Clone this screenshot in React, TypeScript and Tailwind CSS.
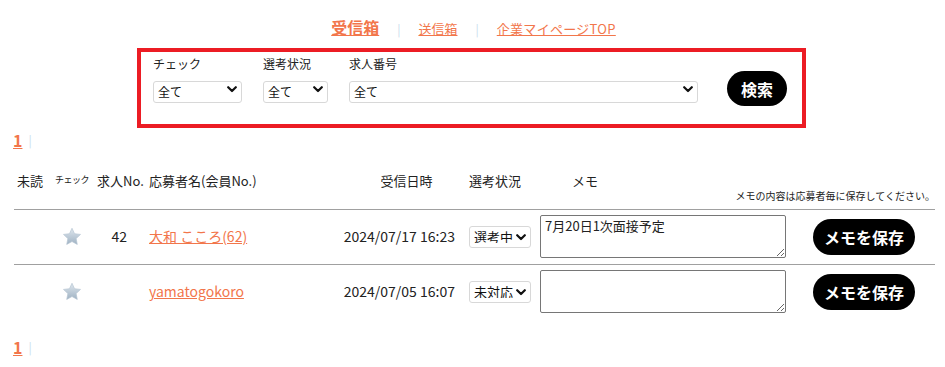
import React from "react";

const Star = () => (
  <svg width="20" height="19" viewBox="0 0 24 23">
    <defs>
      <linearGradient id="sg" x1="0" y1="0" x2="0" y2="1">
        <stop offset="0" stopColor="#dfe7ee" />
        <stop offset="1" stopColor="#9fb2c3" />
      </linearGradient>
    </defs>
    <path
      d="M12 1.5l3.1 6.6 7.2.9-5.3 5 1.4 7.1L12 17.6l-6.4 3.5 1.4-7.1-5.3-5 7.2-.9z"
      fill="url(#sg)"
      stroke="#b5c4d1"
      strokeWidth="0.8"
      strokeLinejoin="round"
    />
  </svg>
);

const Chevron = () => (
  <svg width="10" height="7" viewBox="0 0 10 7" className="pointer-events-none">
    <path d="M1.2 1.2L5 5l3.8-3.8" fill="none" stroke="#111" strokeWidth="2.2" strokeLinecap="round" strokeLinejoin="round" />
  </svg>
);

function Sel({ w, value, size = "text-[12px]", pr = "pr-5" }: { w: string; value: string; size?: string; pr?: string }) {
  return (
    <div className={`relative ${w} h-[22px]`}>
      <select
        className={`appearance-none w-full h-full border border-[#d8d8d8] rounded-[3px] bg-white pl-[4px] ${pr} ${size} text-[#111] leading-none`}
        defaultValue={value}
      >
        <option>{value}</option>
      </select>
      <span className="absolute right-[5px] top-[8px] flex">
        <Chevron />
      </span>
    </div>
  );
}

export default function App() {
  const font = { fontFamily: '"Noto Sans CJK JP", "Noto Sans", sans-serif' };
  return (
    <div className="w-[945px] h-[367px] bg-white text-[#222] overflow-hidden" style={font}>
      <nav className="flex justify-center items-end h-[37px] pb-[2px] text-[#f2764b]">
        <a className="underline text-[16px] font-bold leading-none ml-[2px]">受信箱</a>
        <span className="mx-[18px] text-[#c9dcec] text-[12px] leading-none">|</span>
        <a className="underline text-[13px] leading-none">送信箱</a>
        <span className="mx-[18px] text-[#c9dcec] text-[12px] leading-none">|</span>
        <a className="underline text-[13px] leading-none tracking-[0.3px]">企業マイページTOP</a>
      </nav>

      <div className="ml-[137px] mt-[11px] w-[669px] h-[80px] border-4 border-[#ec1c24] flex items-start pl-[12px] pt-[5px]">
        <div className="flex flex-col gap-[7px] mr-[21px]">
          <span className="text-[12px] leading-[14px]">チェック</span>
          <Sel w="w-[89px]" value="全て" />
        </div>
        <div className="flex flex-col gap-[7px] mr-[21px]">
          <span className="text-[12px] leading-[14px]">選考状況</span>
          <Sel w="w-[65px]" value="全て" />
        </div>
        <div className="flex flex-col gap-[7px] mr-[29px]">
          <span className="text-[12px] leading-[14px]">求人番号</span>
          <Sel w="w-[349px]" value="全て" />
        </div>
        <button className="mt-[14px] w-[60px] h-[35px] rounded-full bg-black text-white font-bold text-[16px] leading-none">
          検索
        </button>
      </div>

      <div className="flex items-center ml-[13px] mt-[1px] h-[22px]">
        <a className="text-[#f2764b] underline font-bold text-[16px] leading-none">1</a>
        <span className="ml-[6px] text-[#c9dcec] text-[12px] leading-none">|</span>
      </div>

      <table className="ml-[14px] mt-[9px] w-[921px] border-collapse text-[14px]">
        <thead>
          <tr className="border-b border-[#a0a0a0] h-[49px] align-top">
            <th className="w-[36px] font-normal text-[13px] text-left pl-[3px] pt-[11px]">未読</th>
            <th className="w-[44px] font-normal text-[9px] text-center pt-[13px] tracking-[-0.5px]">チェック</th>
            <th className="w-[51px] font-normal text-[13px] text-left pl-[3px] pt-[11px]">求人No.</th>
            <th className="w-[195px] font-normal text-[13px] text-left pl-[4px] pt-[11px] whitespace-nowrap">応募者名(会員No.)</th>
            <th className="w-[124px] font-normal text-[13px] text-center pl-[9px] pt-[11px]">受信日時</th>
            <th className="w-[72px] font-normal text-[13px] text-left pl-[5px] pt-[11px]">選考状況</th>
            <th colSpan={2} className="font-normal text-[13px] text-left pt-[11px] relative">
              <span className="ml-[36px]">メモ</span>
              <span className="absolute right-[0px] top-[28px] text-[10px] whitespace-nowrap">メモの内容は応募者毎に保存してください。</span>
            </th>
          </tr>
        </thead>
        <tbody>
          <tr className="border-b border-[#a0a0a0] h-[55px]">
            <td></td>
            <td className="text-center">
              <span className="inline-flex mt-[4px]"><Star /></span>
            </td>
            <td className="text-right pr-[18px]">42</td>
            <td className="pl-[4px]">
              <a className="text-[#f2764b] underline">大和 こころ(62)</a>
            </td>
            <td className="text-right pr-[9px] whitespace-nowrap">2024/07/17 16:23</td>
            <td className="pl-[5px]">
              <Sel w="w-[62px]" value="選考中" size="text-[13px]" pr="pr-[16px]" />
            </td>
            <td className="w-[267px] pl-[4px]">
              <textarea
                className="block w-[246px] h-[43px] border border-[#767676] rounded-[2px] text-[13px] px-[4px] py-[1px] leading-[18px]"
                defaultValue="7月20日1次面接予定"
              />
            </td>
            <td className="text-left pl-[10px]">
              <button className="w-[102px] h-[36px] rounded-full bg-black text-white font-bold text-[16px] leading-none">
                メモを保存
              </button>
            </td>
          </tr>
          <tr className="h-[55px]">
            <td></td>
            <td className="text-center">
              <span className="inline-flex mt-[4px]"><Star /></span>
            </td>
            <td></td>
            <td className="pl-[4px]">
              <a className="text-[#f2764b] underline">yamatogokoro</a>
            </td>
            <td className="text-right pr-[9px] whitespace-nowrap">2024/07/05 16:07</td>
            <td className="pl-[5px]">
              <Sel w="w-[62px]" value="未対応" size="text-[13px]" pr="pr-[16px]" />
            </td>
            <td className="pl-[4px]">
              <textarea className="block w-[246px] h-[43px] border border-[#767676] rounded-[2px] text-[13px] px-[4px] py-[1px]" />
            </td>
            <td className="text-left pl-[10px]">
              <button className="w-[102px] h-[36px] rounded-full bg-black text-white font-bold text-[16px] leading-none">
                メモを保存
              </button>
            </td>
          </tr>
        </tbody>
      </table>

      <div className="flex items-center ml-[13px] mt-[17px] h-[22px]">
        <a className="text-[#f2764b] underline font-bold text-[16px] leading-none">1</a>
        <span className="ml-[6px] text-[#c9dcec] text-[12px] leading-none">|</span>
      </div>
    </div>
  );
}
